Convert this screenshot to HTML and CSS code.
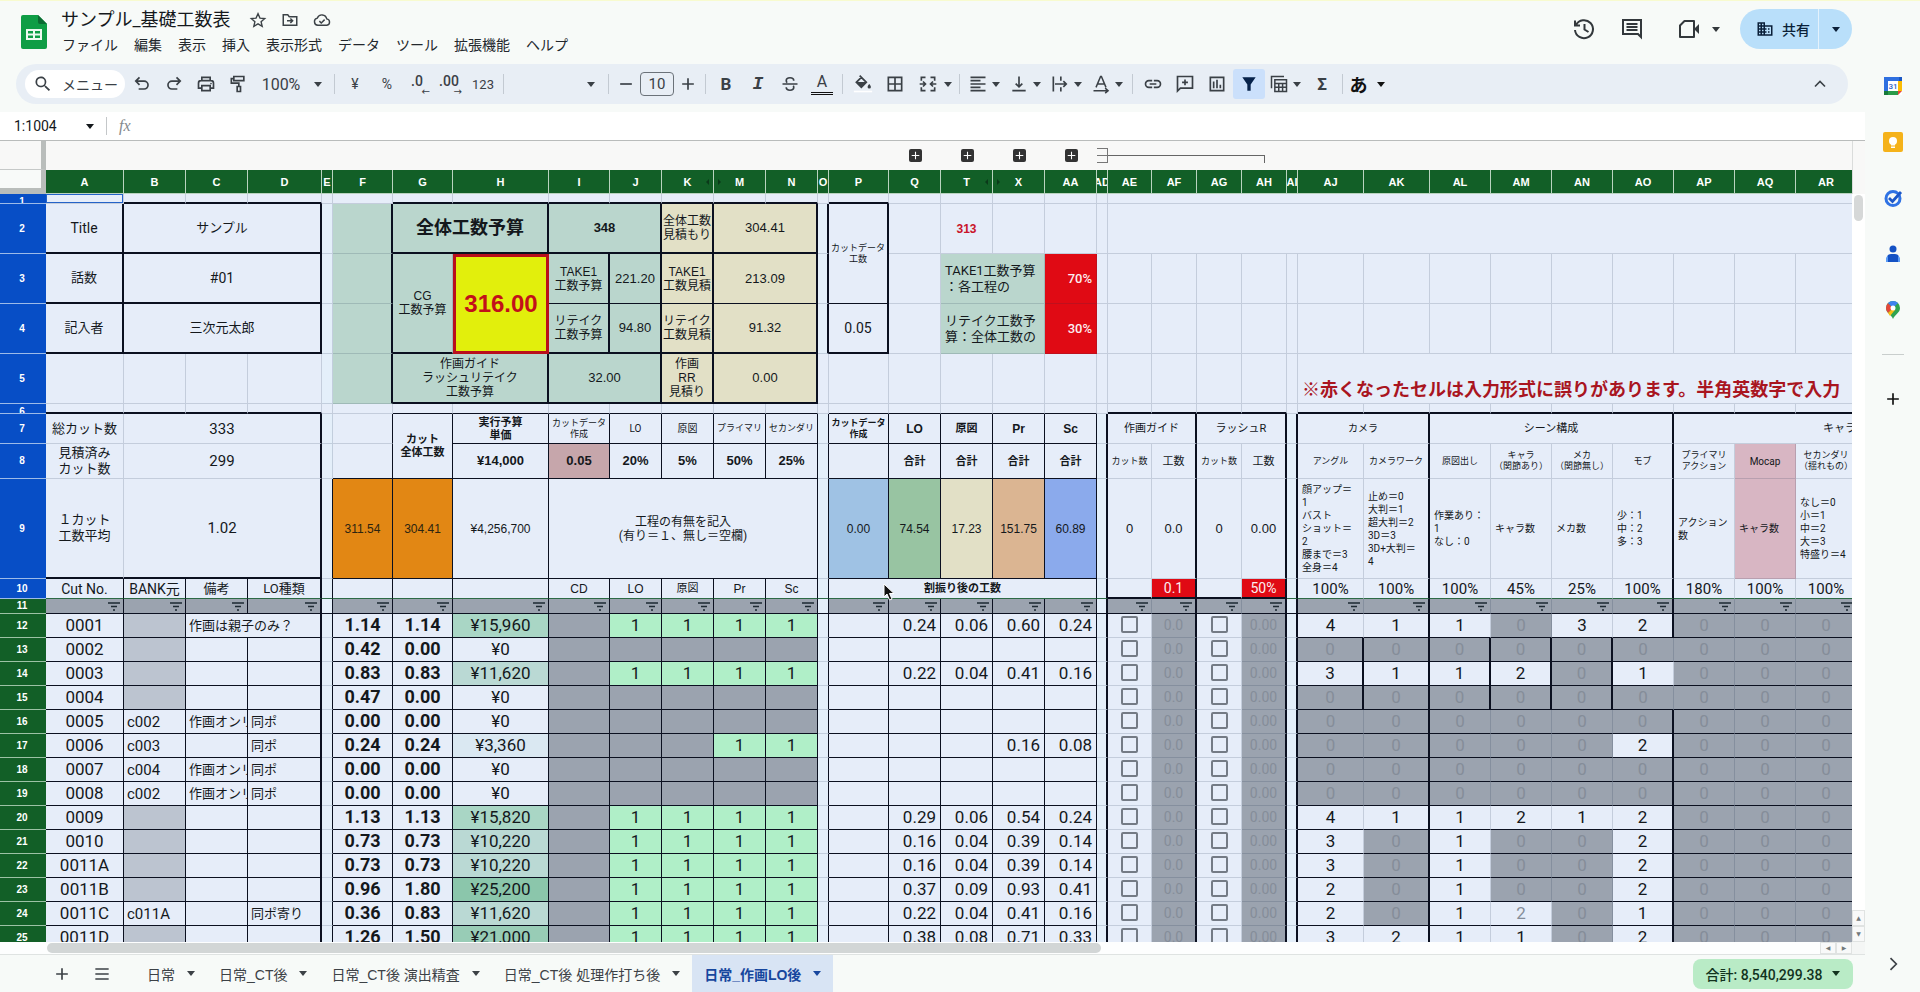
FILE: index.html
```html
<!DOCTYPE html>
<html lang="ja">
<head>
<meta charset="utf-8">
<title>サンプル_基礎工数表</title>
<link rel="stylesheet" href="styles.css">
</head>
<body>
<svg class="sprite" aria-hidden="true">
  <symbol id="caret" viewBox="0 0 10 6"><path d="M0 0h10L5 6z" fill="currentColor"/></symbol>
  <symbol id="filt" viewBox="0 0 12 9"><path d="M0 1h12M3 4.500h6M5 8h2" stroke="currentColor" stroke-width="1.300"/></symbol>
  <symbol id="search" viewBox="0 0 24 24"><path d="M15.500 14h-.8l-.3-.3A6.500 6.500 0 1 0 13.700 14.400l.3.300v.8l5 5 1.500-1.500zm-6 0a4.500 4.500 0 1 1 0-9 4.500 4.500 0 0 1 0 9z" fill="currentColor"/></symbol>
  <symbol id="undo" viewBox="0 0 24 24"><path d="M9 4L4.500 8.500 9 13M5 8.500h9.500a4.700 4.700 0 0 1 0 9.500H8" fill="none" stroke="currentColor" stroke-width="2"/></symbol>
  <symbol id="redo" viewBox="0 0 24 24"><path d="M15 4l4.500 4.500L15 13M19 8.500H9.500a4.700 4.700 0 0 0 0 9.500H16" fill="none" stroke="currentColor" stroke-width="2"/></symbol>
  <symbol id="print" viewBox="0 0 24 24"><path d="M7 8V4h10v4M7 17H3v-6a3 3 0 0 1 3-3h12a3 3 0 0 1 3 3v6h-4M7 14h10v6H7z" fill="none" stroke="currentColor" stroke-width="2"/><circle cx="18" cy="11.500" r="1" fill="currentColor"/></symbol>
  <symbol id="paint" viewBox="0 0 24 24"><path d="M7 3h12v5H7zM7 5.500H4V11h9v4M11 15h4v6h-4z" fill="none" stroke="currentColor" stroke-width="2"/></symbol>
  <symbol id="minus" viewBox="0 0 24 24"><path d="M5 12h14" stroke="currentColor" stroke-width="2"/></symbol>
  <symbol id="plus" viewBox="0 0 24 24"><path d="M12 5v14M5 12h14" stroke="currentColor" stroke-width="2"/></symbol>
  <symbol id="strike" viewBox="0 0 24 24"><path d="M3 12h18M16.500 8c0-2-1.800-3.500-4.500-3.500S7.500 6 7.500 8c0 1 .4 1.800 1.200 2.300M7.500 16c0 2 1.800 3.500 4.500 3.500s4.500-1.500 4.500-3.500c0-.8-.2-1.400-.6-1.900" fill="none" stroke="currentColor" stroke-width="2"/></symbol>
  <symbol id="fill" viewBox="0 0 24 24"><path d="M8 2l8 8-6 6-6-6 6-6M5 10.500h10L10 15.500z" fill="none" stroke="currentColor" stroke-width="2"/><path d="M5 10.500h10l-5 5zM19.500 12s-2 2.200-2 3.500a2 2 0 0 0 4 0c0-1.300-2-3.500-2-3.500z" fill="currentColor"/><path d="M1 21h22" stroke="#fff" stroke-width="2"/></symbol>
  <symbol id="borders" viewBox="0 0 24 24"><path d="M4 4h16v16H4zM12 4v16M4 12h16" fill="none" stroke="currentColor" stroke-width="2"/></symbol>
  <symbol id="merge" viewBox="0 0 24 24"><path d="M9 4H4v4M15 4h5v4M9 20H4v-4M15 20h5v-4M2 12h6M22 12h-6M6 9l3 3-3 3M18 9l-3 3 3 3" fill="none" stroke="currentColor" stroke-width="2"/></symbol>
  <symbol id="align" viewBox="0 0 24 24"><path d="M3 4h18M3 8h12M3 12h18M3 16h12M3 20h18" stroke="currentColor" stroke-width="2"/></symbol>
  <symbol id="valign" viewBox="0 0 24 24"><path d="M4 20h16M12 3v12M8 11.500l4 4 4-4" fill="none" stroke="currentColor" stroke-width="2"/></symbol>
  <symbol id="wrap" viewBox="0 0 24 24"><path d="M4 3v18M13 3v5M13 16v5M6 12h13M16 8.500l3.500 3.500-3.500 3.500" fill="none" stroke="currentColor" stroke-width="2"/></symbol>
  <symbol id="rotate" viewBox="0 0 24 24"><path d="M6 16l5.500-13h1L18 16M8 12h8M3 20h17M17 17l3.500 3-3.500 3" fill="none" stroke="currentColor" stroke-width="1.800"/></symbol>
  <symbol id="link" viewBox="0 0 24 24"><path d="M11 8H7a4 4 0 0 0 0 8h4M13 8h4a4 4 0 0 1 0 8h-4M8 12h8" fill="none" stroke="currentColor" stroke-width="2"/></symbol>
  <symbol id="addcomment" viewBox="0 0 24 24"><path d="M3 20.500V3h18v14H6.500zM12 6.500v7M8.500 10h7" fill="none" stroke="currentColor" stroke-width="2"/></symbol>
  <symbol id="chart" viewBox="0 0 24 24"><path d="M4 4h16v16H4zM8 17V9M12 17V7M16 17v-4" fill="none" stroke="currentColor" stroke-width="2"/></symbol>
  <symbol id="funnel" viewBox="0 0 24 24"><path d="M4 4h16l-6 8.500V20h-4v-7.500z" fill="currentColor"/></symbol>
  <symbol id="views" viewBox="0 0 24 24"><path d="M3 17V3h15M7 7h14v14H7zM7 11.500h14M7 16h14M11.700 11.500V21M16.300 11.500V21" fill="none" stroke="currentColor" stroke-width="1.800"/></symbol>
  <symbol id="up" viewBox="0 0 24 24"><path d="M6 15l6-6 6 6" fill="none" stroke="currentColor" stroke-width="2"/></symbol>
  <symbol id="right" viewBox="0 0 24 24"><path d="M9 5l7 7-7 7" fill="none" stroke="currentColor" stroke-width="2"/></symbol>
  <symbol id="star" viewBox="0 0 24 24"><path d="M12 3.500l2.600 6 6.400.6-4.900 4.200 1.500 6.300L12 17.200l-5.600 3.400 1.500-6.300L3 10.100l6.400-.6z" fill="none" stroke="currentColor" stroke-width="1.800"/></symbol>
  <symbol id="folder" viewBox="0 0 24 24"><path d="M3 5h6l2 2.500h10V19H3zM8 13h7M12.500 10l3 3-3 3" fill="none" stroke="currentColor" stroke-width="2"/></symbol>
  <symbol id="cloud" viewBox="0 0 24 24"><path d="M6.500 19a4.800 4.800 0 0 1-.7-9.500A6.500 6.500 0 0 1 18.300 10.500 4.300 4.300 0 0 1 18.500 19zM8.500 13.500l2.500 2.500 4.500-4.500" fill="none" stroke="currentColor" stroke-width="1.900"/></symbol>
  <symbol id="history" viewBox="0 0 24 24"><path d="M4 8a9 9 0 1 1-1 5M3 3.500V8.500h5M12.500 7v5.500l4 2.500" fill="none" stroke="currentColor" stroke-width="2"/></symbol>
  <symbol id="comment" viewBox="0 0 24 24"><path d="M3 3h18v17l-3-3H3zM6.500 7h11M6.500 10h11M6.500 13h11" fill="none" stroke="currentColor" stroke-width="2"/></symbol>
  <symbol id="video" viewBox="0 0 24 24"><path d="M7.500 4H17v16H3V8.500z" fill="none" stroke="currentColor" stroke-width="2" stroke-linejoin="round"/><path d="M18 11l4-4v10l-4-4z" fill="currentColor"/></symbol>
  <symbol id="org" viewBox="0 0 24 24"><path d="M12 7V3H2v18h20V7zM6 19H4v-2h2zm0-4H4v-2h2zm0-4H4V9h2zm0-4H4V5h2zm4 12H8v-2h2zm0-4H8v-2h2zm0-4H8V9h2zm0-4H8V5h2zm10 12h-8v-2h2v-2h-2v-2h2v-2h-2V9h8zm-2-8h-2v2h2zm0 4h-2v2h2z" fill="currentColor"/></symbol>
</svg>

<div class="main">
  <header class="top">
    <svg class="logo" viewBox="0 0 26 34"><path d="M2 0h15l9 9v23a2 2 0 0 1-2 2H2a2 2 0 0 1-2-2V2a2 2 0 0 1 2-2z" fill="#0f9d45"/><path d="M17 0l9 9h-7a2 2 0 0 1-2-2z" fill="#0b6b32"/><path d="M5 14h16v11H5zM7 16v2.500h5V16zM14 16v2.500h5V16zM7 20.500V23h5v-2.500zM14 20.500V23h5v-2.500z" fill="#eefaf0" fill-rule="evenodd"/></svg>
    <div class="titles">
      <div class="titlerow">
        <h1>サンプル_基礎工数表</h1>
        <button class="ticon" aria-label="スター"><svg><use href="#star"/></svg></button>
        <button class="ticon" aria-label="移動"><svg><use href="#folder"/></svg></button>
        <button class="ticon" aria-label="保存状況"><svg><use href="#cloud"/></svg></button>
      </div>
      <nav class="menu"><button>ファイル</button><button>編集</button><button>表示</button><button>挿入</button><button>表示形式</button><button>データ</button><button>ツール</button><button>拡張機能</button><button>ヘルプ</button></nav>
    </div>
    <div class="actions">
      <button aria-label="変更履歴"><svg><use href="#history"/></svg></button>
      <button aria-label="コメント"><svg><use href="#comment"/></svg></button>
      <button class="meet" aria-label="通話"><svg><use href="#video"/></svg><svg class="caret"><use href="#caret"/></svg></button>
      <div class="share"><button class="sharemain"><svg><use href="#org"/></svg>共有</button><button class="sharemore" aria-label="共有オプション"><svg class="caret"><use href="#caret"/></svg></button></div>
    </div>
  </header>

  <div class="toolbar">
    <label class="finder"><svg><use href="#search"/></svg><input type="text" value="メニュー" aria-label="メニューを検索"></label>
    <button class="tb" aria-label="元に戻す"><svg><use href="#undo"/></svg></button>
    <button class="tb" aria-label="やり直し"><svg><use href="#redo"/></svg></button>
    <button class="tb" aria-label="印刷"><svg><use href="#print"/></svg></button>
    <button class="tb" aria-label="書式の貼り付け"><svg><use href="#paint"/></svg></button>
    <button class="zoom">100%<svg class="caret"><use href="#caret"/></svg></button>
    <span class="sep"></span>
    <button class="tb">¥</button><button class="tb">%</button>
    <button class="tb dec">.0<i>←</i></button><button class="tb dec">.00<i>→</i></button>
    <button class="tb num">123</button>
    <span class="sep"></span>
    <button class="fontsel" aria-label="フォント"><svg class="caret"><use href="#caret"/></svg></button>
    <span class="sep"></span>
    <button class="tb slim" aria-label="縮小"><svg><use href="#minus"/></svg></button>
    <input class="size" type="text" value="10" aria-label="フォントサイズ">
    <button class="tb slim" aria-label="拡大"><svg><use href="#plus"/></svg></button>
    <span class="sep"></span>
    <button class="tb bold">B</button><button class="tb ital">I</button>
    <button class="tb" aria-label="取り消し線"><svg><use href="#strike"/></svg></button>
    <button class="tb color"><span>A</span></button>
    <span class="sep"></span>
    <button class="tb" aria-label="塗りつぶし"><svg><use href="#fill"/></svg></button>
    <button class="tb" aria-label="枠線"><svg><use href="#borders"/></svg></button>
    <button class="drop wide" aria-label="セルを結合"><svg><use href="#merge"/></svg><svg class="caret"><use href="#caret"/></svg></button>
    <span class="sep"></span>
    <button class="drop" aria-label="水平揃え"><svg><use href="#align"/></svg><svg class="caret"><use href="#caret"/></svg></button>
    <button class="drop" aria-label="垂直揃え"><svg><use href="#valign"/></svg><svg class="caret"><use href="#caret"/></svg></button>
    <button class="drop" aria-label="折り返し"><svg><use href="#wrap"/></svg><svg class="caret"><use href="#caret"/></svg></button>
    <button class="drop" aria-label="回転"><svg><use href="#rotate"/></svg><svg class="caret"><use href="#caret"/></svg></button>
    <span class="sep"></span>
    <button class="tb" aria-label="リンク"><svg><use href="#link"/></svg></button>
    <button class="tb" aria-label="コメントを追加"><svg><use href="#addcomment"/></svg></button>
    <button class="tb" aria-label="グラフ"><svg><use href="#chart"/></svg></button>
    <button class="tb on" aria-label="フィルタ"><svg><use href="#funnel"/></svg></button>
    <button class="drop" aria-label="表示"><svg><use href="#views"/></svg><svg class="caret"><use href="#caret"/></svg></button>
    <button class="tb bold">Σ</button>
    <span class="sep"></span>
    <button class="drop ja"><span>あ</span><svg class="caret"><use href="#caret"/></svg></button>
    <button class="tb collapse" aria-label="メニューを非表示"><svg><use href="#up"/></svg></button>
  </div>

  <div class="formula">
    <label class="namebox"><input type="text" value="1:1004" aria-label="名前ボックス"><svg class="caret"><use href="#caret"/></svg></label>
    <span class="fx">fx</span>
    <input class="fin" type="text" aria-label="数式">
  </div>

  <div class="grid">
    <div class="view">
      <table class="sheet">
        <colgroup><col class="c46"><col class="c78"><col class="c62"><col class="c62"><col class="c74"><col class="c11"><col class="c60"><col class="c60"><col class="c96"><col class="c61"><col class="c52"><col class="c52"><col class="c52"><col class="c52"><col class="c11"><col class="c60"><col class="c52"><col class="c52"><col class="c52"><col class="c52"><col class="c11"><col class="c44"><col class="c45"><col class="c45"><col class="c45"><col class="c11"><col class="c66"><col class="c66"><col class="c61"><col class="c61"><col class="c61"><col class="c61"><col class="c61"><col class="c61"><col class="c61"></colgroup>
        <thead>
          <tr class="groups"><td class="gcorner"></td><td colspan="15"></td>
            <td><button class="exp" aria-label="展開"><svg><use href="#plus"/></svg></button></td><td><button class="exp" aria-label="展開"><svg><use href="#plus"/></svg></button></td><td><button class="exp" aria-label="展開"><svg><use href="#plus"/></svg></button></td><td><button class="exp" aria-label="展開"><svg><use href="#plus"/></svg></button></td>
            <td><button class="fold" aria-label="折りたたむ"></button></td><td colspan="4"><div class="span"></div></td><td colspan="10"></td></tr>
          <tr class="heads"><td class="corner"></td><th>A</th><th>B</th><th>C</th><th>D</th><th>E</th><th>F</th><th>G</th><th>H</th><th>I</th><th>J</th><th class="hl">K</th><th class="hr">M</th><th>N</th><th>O</th><th>P</th><th>Q</th><th class="hl">T</th><th class="hr">X</th><th>AA</th><th><div class="cut">AD</div></th><th>AE</th><th>AF</th><th>AG</th><th>AH</th><th><div class="cut">AI</div></th><th>AJ</th><th>AK</th><th>AL</th><th>AM</th><th>AN</th><th>AO</th><th>AP</th><th>AQ</th><th>AR</th></tr>
        </thead>
        <tbody>
          <tr class="h10"><th><div class="tiny">1</div></th><td class="cur"></td><td class="b2"></td><td class="b2"></td><td class="b2"></td><td></td><td></td><td class="b2"></td><td class="b2"></td><td class="b2"></td><td class="b2"></td><td class="b2"></td><td class="b2"></td><td class="b2"></td><td></td><td class="b2"></td><td></td><td></td><td></td><td></td><td></td><td colspan="14"></td></tr>
          <tr class="h50"><th>2</th><td class="r2 b2 s14">Title</td><td class="r2 b2 s13" colspan="3">サンプル</td><td class="gut"></td><td class="gr r2"></td><td class="gr r2 b2 s18 b" colspan="2">全体工数予算</td><td class="gr r2 b2 s13 b hv" colspan="2">348</td><td class="be r2 b2 s12">全体工数<br>見積もり</td><td class="be r2 b2 s13 hv" colspan="2">304.41</td><td class="gut r2"></td><td class="r2 bk s9" rowspan="2">カットデータ<br>工数</td><td></td><td class="s12 b hv redt">313</td><td></td><td></td><td></td><td colspan="14"></td></tr>
          <tr class="h50"><th>3</th><td class="r2 b2 s13">話数</td><td class="r2 b2 s14" colspan="3">#01</td><td class="gut"></td><td class="gr r2"></td><td class="gr b2 s12 hv" rowspan="2">CG<br>工数予算</td><td class="yel s24 b hv" rowspan="2">316.00</td><td class="gr r2 bk s12 hv">TAKE1<br>工数予算</td><td class="gr r2 bk s13 hv">221.20</td><td class="be r2 bk s12 hv">TAKE1<br>工数見積</td><td class="be r2 bk s13 hv" colspan="2">213.09</td><td class="gut r2"></td><td></td><td class="gr s13 lt pr" colspan="2">TAKE1工数予算<br>：各工程の</td><td class="red s13 rt md">70%</td><td></td><td></td><td></td><td></td><td></td><td></td><td></td><td></td><td></td><td></td><td></td><td></td><td></td><td></td><td></td></tr>
          <tr class="h50"><th>4</th><td class="r2 b2 s13">記入者</td><td class="r2 b2 s13" colspan="3">三次元太郎</td><td class="gut"></td><td class="gr r2"></td><td class="gr r2 b2 s12">リテイク<br>工数予算</td><td class="gr r2 b2 s13 hv">94.80</td><td class="be r2 b2 s12">リテイク<br>工数見積</td><td class="be r2 b2 s13 hv" colspan="2">91.32</td><td class="gut r2"></td><td class="r2 b2 s14">0.05</td><td></td><td class="gr s13 lt pr" colspan="2">リテイク工数予<br>算：全体工数の</td><td class="red s13 rt md">30%</td><td></td><td></td><td></td><td></td><td></td><td></td><td></td><td></td><td></td><td></td><td></td><td></td><td></td><td></td><td></td></tr>
          <tr class="h50"><th>5</th><td></td><td></td><td></td><td></td><td class="gut"></td><td class="gr r2"></td><td class="gr r2 b2 s12" colspan="2">作画ガイド<br>ラッシュリテイク<br>工数予算</td><td class="gr r2 b2 s13 hv" colspan="2">32.00</td><td class="be r2 b2 s12 hv">作画<br>RR<br>見積り</td><td class="be r2 b2 s13 hv" colspan="2">0.00</td><td></td><td></td><td></td><td></td><td></td><td></td><td></td><td></td><td></td><td></td><td></td><td></td><td class="warn" colspan="9">※赤くなったセルは入力形式に誤りがあります。半角英数字で入力</td></tr>
          <tr class="h10"><th><div class="tiny">6</div></th><td class="b2"></td><td class="b2"></td><td class="b2"></td><td class="b2"></td><td></td><td></td><td class="bk"></td><td class="bk"></td><td class="bk"></td><td class="bk"></td><td class="bk"></td><td class="bk"></td><td class="bk"></td><td></td><td class="bk"></td><td class="bk"></td><td class="bk"></td><td class="bk"></td><td class="bk"></td><td></td><td class="b2"></td><td class="b2"></td><td class="b2"></td><td class="b2"></td><td></td><td class="b2"></td><td class="b2"></td><td class="b2"></td><td class="b2"></td><td class="b2"></td><td class="b2"></td><td class="b2"></td><td class="b2"></td><td class="b2"></td></tr>
          <tr class="h30"><th>7</th><td class="s13">総カット数</td><td class="r2 s15" colspan="3">333</td><td class="gut"></td><td class="rk"></td><td class="rk bk s11 b" rowspan="2">カット<br>全体工数</td><td class="rk bk s11 b">実行予算<br>単価</td><td class="rk bk s9">カットデータ<br>作成</td><td class="rk bk s10">LO</td><td class="rk bk s10">原図</td><td class="rk bk s9">プライマリ</td><td class="rk bk s9">セカンダリ</td><td class="gut rk"></td><td class="rk bk s9 b">カットデータ<br>作成</td><td class="rk bk s12 b hv">LO</td><td class="rk bk s11 b">原図</td><td class="rk bk s12 b hv">Pr</td><td class="rk bk s12 b hv">Sc</td><td class="gut r2"></td><td class="r2 s11" colspan="2">作画ガイド</td><td class="r2 s11" colspan="2">ラッシュR</td><td class="gut r2"></td><td class="r2 s10" colspan="2">カメラ</td><td class="r2 s11" colspan="4">シーン構成</td><td class="s11 far" colspan="3">キャラ</td></tr>
          <tr class="h35"><th>8</th><td class="s13 lh16">見積済み<br>カット数</td><td class="r2 s15" colspan="3">299</td><td class="gut"></td><td class="rk bk"></td><td class="rk bk s13 b hv">¥14,000</td><td class="rk bk s13 b hv rose">0.05</td><td class="rk bk s13 b hv">20%</td><td class="rk bk s13 b hv">5%</td><td class="rk bk s13 b hv">50%</td><td class="rk bk s13 b hv">25%</td><td class="gut rk"></td><td class="rk bk"></td><td class="rk bk s11 b">合計</td><td class="rk bk s11 b">合計</td><td class="rk bk s11 b">合計</td><td class="rk bk s11 b">合計</td><td class="gut r2"></td><td class="s9">カット数</td><td class="r2 s11">工数</td><td class="s9">カット数</td><td class="r2 s11">工数</td><td class="gut r2"></td><td class="s9">アングル</td><td class="r2 s9">カメラワーク</td><td class="s9">原図出し</td><td class="s9">キャラ<br>（関節あり）</td><td class="s9">メカ<br>（関節無し）</td><td class="r2 s9">モブ</td><td class="s9">プライマリ<br>アクション</td><td class="s10 pink">Mocap</td><td class="s9">セカンダリ<br>（揺れもの）</td></tr>
          <tr class="h100"><th>9</th><td class="b2 s13 lh16">１カット<br>工数平均</td><td class="r2 b2 s15" colspan="3">1.02</td><td class="gut rk"></td><td class="rk bk or s12 hv">311.54</td><td class="rk bk or s12 hv">304.41</td><td class="rk bk s12 hv">¥4,256,700</td><td class="rk bk s12" colspan="5">工程の有無を記入<br>(有り＝１、無し＝空欄)</td><td class="gut rk"></td><td class="rk bk s12 hv blue">0.00</td><td class="rk bk s12 hv green">74.54</td><td class="rk bk s12 hv be">17.23</td><td class="rk bk s12 hv tan">151.75</td><td class="rk bk s12 hv indigo">60.89</td><td class="gut r2"></td><td class="s13 hv">0</td><td class="r2 s13 hv">0.0</td><td class="s13 hv">0</td><td class="r2 s13 hv">0.00</td><td class="gut r2"></td><td class="note">顔アップ＝<br>1<br>バスト<br>ショット＝<br>2<br>腰まで＝3<br>全身＝4</td><td class="r2 note">止め＝0<br>大判＝1<br>超大判＝2<br>3D＝3<br>3D+大判＝<br>4</td><td class="note">作業あり：<br>1<br>なし：0</td><td class="note">キャラ数</td><td class="note">メカ数</td><td class="r2 note">少：1<br>中：2<br>多：3</td><td class="note">アクション<br>数</td><td class="note pink">キャラ数</td><td class="note">なし＝0<br>小＝1<br>中＝2<br>大＝3<br>特盛り＝4</td></tr>
          <tr class="h20"><th>10</th><td class="rk s14 bg">Cut No.</td><td class="rk s14 bg">BANK元</td><td class="rk s13 bg">備考</td><td class="r2 s13 bg">LO種類</td><td class="gut rk bg"></td><td class="rk bg"></td><td class="rk bg"></td><td class="rk bg"></td><td class="rk bg s12 hv">CD</td><td class="rk bg s12 hv">LO</td><td class="rk bg s11">原図</td><td class="rk bg s12 hv">Pr</td><td class="rk bg s12 hv">Sc</td><td class="gut rk bg"></td><td class="rk bg s11 b" colspan="5">割振り後の工数</td><td class="gut r2 bg"></td><td class="b2"></td><td class="r2 b2 red s14">0.1</td><td class="b2"></td><td class="r2 b2 red s14">50%</td><td class="gut r2 bg"></td><td class="bg s15">100%</td><td class="r2 bg s15">100%</td><td class="bg s15">100%</td><td class="bg s15">45%</td><td class="bg s15">25%</td><td class="r2 bg s15">100%</td><td class="bg s15">180%</td><td class="bg s15">100%</td><td class="bg s15">100%</td></tr>
        </tbody>
        <tbody id="rows"></tbody>
      </table>
      <svg class="pointer" viewBox="0 0 12 18"><path d="M1 1v13l3-3 2.500 6 2.500-1-2.500-5.500H11z" fill="#111" stroke="#fff" stroke-width="1"/></svg>
    </div>
    <div class="vbar"><div class="vcap"></div><div class="vthumb"></div><button class="ar" aria-label="上へ">▲</button><button class="ar" aria-label="下へ">▼</button></div>
  </div>
  <div class="hbar"><div class="hthumb"></div><button class="ar" aria-label="左へ">◀</button><button class="ar" aria-label="右へ">▶</button><span class="hend"></span></div>

  <footer class="tabs">
    <button class="tab ic" aria-label="シートを追加"><svg><use href="#plus"/></svg></button>
    <button class="tab ic" aria-label="すべてのシート"><svg viewBox="0 0 24 24"><path d="M4 6h16M4 12h16M4 18h16" stroke="currentColor" stroke-width="2"/></svg></button>
    <button class="tab first">日常<svg class="caret"><use href="#caret"/></svg></button>
    <button class="tab">日常_CT後<svg class="caret"><use href="#caret"/></svg></button>
    <button class="tab">日常_CT後 演出精査<svg class="caret"><use href="#caret"/></svg></button>
    <button class="tab">日常_CT後 処理作打ち後<svg class="caret"><use href="#caret"/></svg></button>
    <button class="tab active">日常_作画LO後<svg class="caret"><use href="#caret"/></svg></button>
    <button class="total">合計: 8,540,299.38<svg class="caret"><use href="#caret"/></svg></button>
  </footer>
</div>

<aside class="side">
  <button aria-label="カレンダー"><svg viewBox="0 0 20 20"><path d="M1 1h18v18H1z" fill="#fff"/><path d="M1 1h15v4H5v11H1z" fill="#2f6fe0"/><path d="M16 1h3v4h-3z" fill="#1a57c4"/><path d="M15 5h4v10h-4z" fill="#fbbc04"/><path d="M5 15h10v4H5z" fill="#2a9a48"/><path d="M1 15h4v4H1z" fill="#17793a"/><path d="M15 15h4l-4 4z" fill="#e8453a"/><text x="10" y="13" text-anchor="middle" class="cal">31</text></svg></button>
  <button aria-label="Keep"><svg viewBox="0 0 20 20"><rect width="20" height="20" rx="2" fill="#f5b21a"/><circle cx="10" cy="9" r="4" fill="#fff"/><path d="M8 12h4v1.500H8zM8 14.500h4V16H8z" fill="#fff"/></svg></button>
  <button aria-label="ToDo"><svg viewBox="0 0 20 20"><circle cx="10" cy="10.500" r="7" fill="none" stroke="#2f72e4" stroke-width="3"/><path d="M6 10l3.500 3.500L18 4" fill="none" stroke="#1c57c8" stroke-width="2.800"/></svg></button>
  <button aria-label="連絡先"><svg viewBox="0 0 20 20"><circle cx="10" cy="5" r="3.500" fill="#1451c4"/><path d="M4 18v-4a4 4 0 0 1 4-4h4a4 4 0 0 1 4 4v4z" fill="#1451c4"/><path d="M3 18v-4a3 3 0 0 1 2-2v6zM17 18v-4a3 3 0 0 0-2-2v6z" fill="#5b9bf5"/></svg></button>
  <button aria-label="マップ"><svg viewBox="0 0 20 20"><path d="M10 1a7 7 0 0 1 7 7c0 5-5 6-7 11-2-5-7-6-7-11a7 7 0 0 1 7-7z" fill="#30a350"/><path d="M3 8a7 7 0 0 1 2-5l5 5-5 5C4 11.500 3 10 3 8z" fill="#e5483b"/><path d="M5 3a7 7 0 0 1 10 0l-5 5z" fill="#3f82ef"/><path d="M5 13l5-5 2 2-5 6z" fill="#f7bd16"/><circle cx="10" cy="8" r="2.500" fill="#fff"/></svg></button>
  <hr>
  <button class="dark" aria-label="アドオンを取得"><svg><use href="#plus"/></svg></button>
  <button class="hide" aria-label="サイドパネルを非表示"><svg><use href="#right"/></svg></button>
</aside>
<script src="rows.js"></script>
</body>
</html>
```
FILE: styles.css
```css
* { box-sizing: border-box; }
body {
  margin: 0; height: 100vh; display: flex; overflow: hidden;
  background: #f7faf8; border-top: 1px solid #f8fbcf;
  font-family: Roboto, "Noto Sans CJK JP", sans-serif; color: #14181c;
}
button, input { font: inherit; color: inherit; border: 0; background: none; padding: 0; margin: 0; }
button { display: flex; align-items: center; justify-content: center; white-space: nowrap; }
svg { display: block; width: 20px; height: 20px; flex: none; }
svg.caret { width: 8px; height: 5px; }
.sprite { position: absolute; width: 0; height: 0; }
.main { flex: 1; min-width: 0; display: flex; flex-direction: column; }

/* header */
.top { display: flex; height: 63px; padding: 0 13px 0 21px; flex: none; }
.logo { width: 26px; height: 34px; margin-top: 14px; }
.titles { margin-left: 14px; padding-top: 4px; }
.titlerow { display: flex; align-items: center; height: 30px; }
h1 { margin: 0 11px 0 0; font-size: 18px; font-weight: 400; line-height: 30px; }
.ticon { width: 32px; color: #3c4247; }
.ticon svg { width: 18px; height: 18px; }
.menu { display: flex; gap: 16px; padding-left: 1px; font-size: 14px; line-height: 21px; color: #23282d; }
.actions { display: flex; align-items: center; margin-left: auto; height: 56px; color: #33383c; }
.actions > button { width: 48px; }
.actions svg { width: 24px; height: 24px; }
.actions svg.caret { width: 8px; height: 5px; }
.actions .meet { width: 84px; gap: 11px; padding-left: 0; }
.share { display: flex; height: 40px; border-radius: 20px; background: #b9dffa; color: #0a1f38; overflow: hidden; }
.sharemain { width: 79px; gap: 8px; padding-left: 8px; font-size: 14px; font-weight: 500; border-right: 1px solid #e4f2fc; }
.share .sharemain svg { width: 18px; height: 18px; }
.sharemore { width: 33px; }

/* toolbar */
.toolbar { display: flex; align-items: center; height: 40px; margin: 0 17px 8px 16px; padding: 0 12px 0 9px; border-radius: 20px; background: #e8eef5; flex: none; font-size: 14px; color: #3a4046; }
.finder { display: flex; align-items: center; width: 100px; height: 28px; padding-left: 8px; gap: 9px; border-radius: 14px; background: #fff; margin-right: 1px; }
.finder input { width: 60px; font-size: 14px; }
.tb { width: 32px; height: 30px; }
.tb svg, .drop svg { width: 20px; height: 20px; }
.slim { width: 26px; }
.zoom { width: 76px; font-size: 16px; gap: 14px; }
.sep { width: 1px; height: 20px; margin: 0 4px; background: #c3cad2; }
.num { font-size: 13px; }
.dec { position: relative; font-weight: 500; padding: 0 4px 6px 0; }
.dec i { position: absolute; right: 5px; bottom: 2px; font: 500 10px/10px "DejaVu Sans", sans-serif; }
.fontsel { width: 96px; justify-content: flex-end; padding-right: 9px; }
.size { width: 34px; height: 24px; margin: 0 1px; border: 1px solid #6b7279; border-radius: 4px; text-align: center; font-size: 15px; }
.bold { font-size: 17px; font-weight: 700; }
.ital { font-size: 18px; font-weight: 700; font-style: italic; font-family: "Liberation Mono", monospace; }
.color span { width: 22px; padding-bottom: 2px; font-size: 16px; line-height: 16px; border-bottom: 3px double #111; }
.drop { width: 41px; gap: 3px; height: 30px; }
.drop svg.caret { width: 8px; height: 5px; margin: 0 1px; }
.drop.wide { width: 44px; gap: 5px; padding-left: 4px; }
.ja { font-size: 18px; font-weight: 700; color: #111; gap: 8px; }
.on { background: #cbe0fb; border-radius: 3px; color: #06224a; }
.collapse { margin-left: auto; }

/* formula bar */
.formula { display: flex; align-items: center; height: 29px; background: #fff; border-bottom: 1px solid #b9bcbb; flex: none; font-size: 14px; }
.namebox { display: flex; align-items: center; width: 107px; height: 18px; padding-left: 14px; border-right: 1px solid #c4c7c9; }
.namebox input { width: 72px; }
.fx { width: 40px; padding-left: 12px; font: italic 16px/18px "Liberation Serif", serif; color: #84898c; }
.fin { flex: 1; }

/* sheet */
.grid { display: flex; flex: 1; min-height: 0; }
.view { flex: 1; min-width: 0; overflow: hidden; position: relative; background: #e6edf9; }
.sheet { table-layout: fixed; width: 1px; border-collapse: separate; border-spacing: 0; }
.c11 { width: 11px; } .c44 { width: 44px; } .c45 { width: 45px; } .c46 { width: 46px; } .c52 { width: 52px; }
.c60 { width: 60px; } .c61 { width: 61px; } .c62 { width: 62px; } .c66 { width: 66px; } .c74 { width: 74px; }
.c78 { width: 78px; } .c96 { width: 96px; }
.groups { height: 29px; background: #f8f8f7; }
.heads { height: 24px; }
.h10 { height: 10px; } .h15 { height: 15px; } .h20 { height: 20px; } .h24 { height: 24px; } .h30 { height: 30px; }
.h35 { height: 35px; } .h50 { height: 50px; } .h100 { height: 100px; }
.sheet th, .sheet td { padding: 0; overflow: hidden; white-space: nowrap; text-align: center; vertical-align: middle; }
.sheet th { color: #fff; font: 700 11px/12px "Liberation Sans", sans-serif; }
.heads th { background: #125f27; border-right: 1px solid #b9d3bf; border-bottom: 1px solid #b9d3bf; position: relative; }
.cut { width: 10px; display: flex; justify-content: center; overflow: hidden; }
.hl::after, .hr::after { content: ""; position: absolute; top: 9px; border: 3px solid transparent; }
.hl::after { right: 4px; border-right-color: #0b3a1a; }
.hr::after { left: 4px; border-left-color: #0b3a1a; }
.sheet .gcorner { background: #f8f8f7; border-right: 5px solid #b9bdbb; border-bottom: 1px solid #c6c9c8; }
.sheet .corner { background: #f8faf9; border-right: 5px solid #b9bdbb; border-bottom: 6px solid #b9bdbb; }
.exp { width: 13px; height: 13px; margin: 0 auto; background: #333; color: #fff; border-radius: 2px; }
.exp svg { width: 13px; height: 13px; }
.fold { width: 11px; height: 15px; border: 1px solid #777; border-left: 0; background: linear-gradient(#777, #777) 0 6px / 11px 1px no-repeat; }
.span { width: 157px; height: 8px; margin-top: 7px; border-top: 1px solid #666; border-right: 1px solid #666; }
tbody th { background: #074ec6; border-bottom: 1px solid #9dbbe8; }
.sheet tbody th { font-size: 10px; padding-right: 2px; }
.sheet tbody .sel { background: #125f27; border-bottom-color: #9cc2a5; }
.tiny { height: 9px; line-height: 15px; overflow: hidden; }
tbody td { border-right: 1px solid rgba(30, 45, 80, .17); border-bottom: 1px solid rgba(30, 45, 80, .17); font-size: 12px; line-height: 14px; }
.h10 td, .h15 td { font-size: 8px; line-height: 8px; }
.sheet .h24 td { padding-bottom: 2px; }
.sheet .rk { border-right: 1px solid #0b1020; } .sheet .bk { border-bottom: 1px solid #0b1020; }
.sheet .r2 { border-right: 2px solid #0b1020; } .sheet .b2 { border-bottom: 2px solid #0b1020; }
.sheet .bg { border-bottom: 1px solid #2c6a45; }
.cur { box-shadow: inset 0 0 0 1px #2463c8; }
.s9 { font-size: 9px; line-height: 11px; } .s10 { font-size: 10px; line-height: 13px; } .s11 { font-size: 11px; line-height: 13px; }
.s12 { font-size: 12px; line-height: 14px; } .s13 { font-size: 13px; line-height: 16px; } .s14 { font-size: 14px; line-height: 16px; }
.s15 { font-size: 15px; line-height: 16px; } .s17 { font-size: 17px; line-height: 18px; } .s18 { font-size: 18px; line-height: 20px; } .s24 { font-size: 24px; }
.b { font-weight: 700; }
.md { font-weight: 500; }
.hv { font-family: "Liberation Sans", "Noto Sans CJK JP", sans-serif; }
.sheet .lt { text-align: left; padding-left: 4px; }
.sheet .rt { text-align: right; padding-right: 4px; }
.sheet .h24 .lt { padding-left: 3px; padding-bottom: 0; }
.sheet .far { text-align: right; padding-right: 0; }
.gut { background: #e4effa; }
.gr { background: #bad6cd; } .be { background: #e2e0c6; } .red { background: #e00a14; color: #fbeef0; }
.redt { color: #c9142a; }
.yel { background: #e2ef0c; color: #c2101a; }
.sheet .yel { border: 3px solid #b90f1c; }
.rose { background: #c6a6ab; } .pink { background: #d8b6c3; } .or { background: #e28714; color: #2c2410; }
.blue { background: #9fc2e4; } .green { background: #98c4a2; } .tan { background: #dbb592; } .indigo { background: #8baaec; }
.sheet .note { font-size: 10px; line-height: 13px; text-align: left; padding-left: 4px; }
.sheet .warn { font-size: 18px; line-height: 20px; font-weight: 700; color: #a9151f; text-align: left; vertical-align: bottom; padding: 0 0 3px 4px; }
.g { background: #9ba3af; } .lg { background: #bcc4d0; } .on1 { background: #b0efc8; }
.dim { color: #858d99; }
.y1 { background: #a9d6c5; } .y2 { background: #bad9d4; } .y3 { background: #dae8f2; } .y4 { background: #8bc6ab; } .y5 { background: #98ccb6; }
.fb { margin: 0 3px 0 auto; color: #1d2a33; }
.fb svg { width: 12px; height: 9px; }
.chk { appearance: none; display: block; width: 17px; height: 17px; margin: 0 auto; border: 2px solid #747b85; border-radius: 2px; }
.pointer { position: absolute; left: 883px; top: 442px; width: 12px; height: 18px; }

/* scroll bars */
.vbar { display: flex; flex-direction: column; width: 13px; background: #fff; flex: none; }
.vcap { height: 53px; background: #f8f8f7; border-left: 1px solid #dadcdb; }
.vthumb { width: 9px; height: 26px; margin: 1px 2px auto; border-radius: 5px; background: #d6d8d8; }
.ar { font: 6px/6px "DejaVu Sans", sans-serif; color: #73797c; background: #f8f9f9; border: 1px solid #e0e3e2; }
.vbar .ar { width: 13px; height: 16px; }
.hbar { display: flex; height: 13px; padding-left: 47px; background: #fdfefe; border-bottom: 1px solid #dfe3e2; flex: none; }
.hthumb { width: 58%; height: 10px; margin: 1px auto 0 0; border-radius: 5px; background: #d2d6d6; }
.hbar .ar { width: 16px; height: 12px; }
.hend { width: 13px; background: #f4f6f5; }

/* tabs */
.tabs { display: flex; align-items: center; height: 37px; padding: 0 12px 0 42px; flex: none; font-size: 14px; color: #3c4146; }
.tab { height: 37px; padding: 0 12px; gap: 12px; font-family: "Liberation Sans", "Noto Sans CJK JP", sans-serif; }
.tab.ic { width: 40px; padding: 0; }
.first { margin-left: 13px; }
.active { background: #d8e4f4; color: #17479e; font-weight: 700; }
.total { margin-left: auto; width: 160px; height: 30px; gap: 10px; border-radius: 8px; background: #b9ebc6; color: #12331e; font-weight: 500; }

/* side panel */
.side { display: flex; flex-direction: column; align-items: center; width: 55px; padding-top: 57px; flex: none; }
.side button { width: 40px; height: 56px; }
.cal { font: 500 8px Roboto, sans-serif; fill: #2a62c8; }
.side hr { width: 22px; margin: 16px 0; border: 0; border-top: 1px solid #c9cecd; }
.side .dark { color: #111; height: 56px; }
.side .hide { margin-top: auto; color: #3c4146; }
```
FILE: rows.js
```js
// Cut rows: no, bank, remark, LO type, F, G, H, H shade, flags I-N, P-AA hours, AJ-AR values
const rows = [
  ['0001', '', '作画は親子のみ？', '', '1.14', '1.14', '¥15,960', 'y1', '01111', ['0.24', '0.06', '0.60', '0.24'], '411032000'],
  ['0002', '', '', '', '0.42', '0.00', '¥0', '', '00000', [], '000000000'],
  ['0003', '', '', '', '0.83', '0.83', '¥11,620', 'y2', '01111', ['0.22', '0.04', '0.41', '0.16'], '311201000'],
  ['0004', '', '', '', '0.47', '0.00', '¥0', '', '00000', [], '000000000'],
  ['0005', 'c002', '作画オンリー', '同ポ', '0.00', '0.00', '¥0', '', '00000', [], '000000000'],
  ['0006', 'c003', '', '同ポ', '0.24', '0.24', '¥3,360', 'y3', '00011', ['', '', '0.16', '0.08'], '000002000'],
  ['0007', 'c004', '作画オンリー', '同ポ', '0.00', '0.00', '¥0', '', '00000', [], '000000000'],
  ['0008', 'c002', '作画オンリー', '同ポ', '0.00', '0.00', '¥0', '', '00000', [], '000000000'],
  ['0009', '', '', '', '1.13', '1.13', '¥15,820', 'y1', '01111', ['0.29', '0.06', '0.54', '0.24'], '411212000'],
  ['0010', '', '', '', '0.73', '0.73', '¥10,220', 'y2', '01111', ['0.16', '0.04', '0.39', '0.14'], '301002000'],
  ['0011A', '', '', '', '0.73', '0.73', '¥10,220', 'y2', '01111', ['0.16', '0.04', '0.39', '0.14'], '301002000'],
  ['0011B', '', '', '', '0.96', '1.80', '¥25,200', 'y4', '01111', ['0.37', '0.09', '0.93', '0.41'], '201002000'],
  ['0011C', 'c011A', '', '同ポ寄り', '0.36', '0.83', '¥11,620', 'y2', '01111', ['0.22', '0.04', '0.41', '0.16'], '201201000'],
  ['0011D', '', '', '', '1.26', '1.50', '¥21,000', 'y5', '01111', ['0.38', '0.08', '0.71', '0.33'], '321102000']
];
const td = (cls, body = '') => `<td class="${cls}">${body}</td>`;
const fb = '<button class="fb" aria-label="フィルタ"><svg><use href="#filt"/></svg></button>';

// Filter row: one entry per column, '-' marks a narrow gutter
const edges = ['rk', 'rk', 'rk', 'r2', '-rk', 'rk', 'rk', 'rk', 'rk', 'rk', 'rk', 'rk', 'rk', '-rk', 'rk', 'rk', 'rk', 'rk', 'rk', '-r2',
  '', 'r2', '', 'r2', '-r2', '', 'r2', '', '', '', 'r2', '', '', ''];
let html = '<tr class="h15"><th class="sel">11</th>' + edges.map(e =>
  e[0] === '-' ? td('gut bk ' + e.slice(1)) : td('g bk ' + e, fb)).join('') + '</tr>';

rows.forEach((r, i) => {
  const [no, bank, memo, type, f, g, h, shade, flags, hours, vals] = r;
  const thickInner = i >= 1 && i <= 3;
  html += `<tr class="h24"><th class="sel">${i + 12}</th>` + td('rk bk s17', no);
  html += td('rk bk lt s15' + (bank ? '' : ' lg'), bank);
  html += i === 0 ? `<td class="r2 bk lt s13" colspan="2">${memo}</td>` : td('rk bk lt s13', memo) + td('r2 bk lt s13', type);
  html += td('gut rk') + td('rk bk s18 b', f) + td('rk bk s18 b', g) + td('rk bk s17 ' + shade, h);
  html += [...flags].map(v => v === '1' ? td('rk bk s17 on1', '1') : td('rk bk g')).join('');
  html += td('gut rk') + td('rk bk');
  for (let k = 0; k < 4; k++) html += td('rk bk rt s17', hours[k] || '');
  html += td('gut r2');
  const chk = '<input class="chk" type="checkbox" aria-label="' + no + '">';
  html += td('', chk) + td('r2 g dim s14', '0.0') + td('', chk) + td('r2 g dim s14', '0.00') + td('gut r2');
  html += [...vals].map((v, k) => {
    const thick = thickInner ? k < 5 : k === 1 || k === 5;
    const pale = v === '0' ? ' g dim' : i === 12 && k === 3 ? ' dim' : '';
    return td('bk s17' + (thick ? ' r2' : '') + pale, v);
  }).join('') + '</tr>';
});
document.getElementById('rows').innerHTML = html;
```
